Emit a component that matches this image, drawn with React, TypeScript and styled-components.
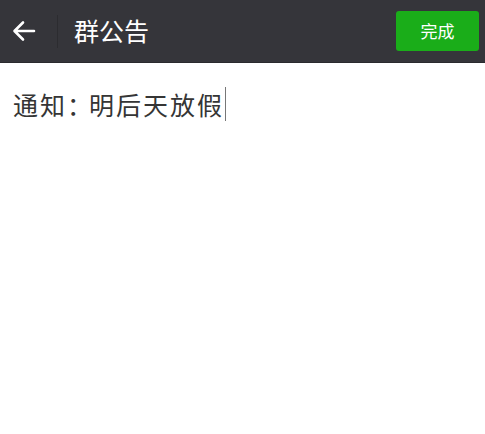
import React from "react";
import styled, { createGlobalStyle } from "styled-components";

const GlobalStyle = createGlobalStyle`
  html, body {
    margin: 0;
    padding: 0;
    background: #ffffff;
  }
  body {
    font-family: "Noto Sans CJK SC", "Noto Sans", sans-serif;
  }
`;

const Page = styled.div`
  width: 485px;
  height: 434px;
  background: #ffffff;
  display: flex;
  flex-direction: column;
`;

const TopBar = styled.div`
  height: 63px;
  background: #35353a;
  border-bottom: 1px solid #2a2a2e;
  display: flex;
  align-items: center;
  padding: 0 6px 0 12px;
  box-sizing: border-box;
`;

const BackButton = styled.div`
  width: 24px;
  height: 24px;
  display: flex;
  align-items: center;
  justify-content: center;
`;

const Divider = styled.div`
  width: 1px;
  height: 33px;
  background: #2c2c30;
  margin: 0 16px 0 21px;
`;

const Title = styled.div`
  flex: 1;
  color: #ffffff;
  font-size: 25px;
  line-height: 1;
  padding-bottom: 2px;
`;

const DoneButton = styled.button`
  width: 83px;
  height: 40px;
  border: 0;
  border-radius: 3px;
  background: #1aad19;
  color: #ffffff;
  font-family: "Noto Sans CJK SC", sans-serif;
  font-size: 17px;
  padding: 0;
  margin-top: -1px;
`;

const Editor = styled.div`
  padding: 24px 13px;
  font-size: 25px;
  letter-spacing: 2px;
  line-height: 34px;
  color: #353535;
  display: flex;
  align-items: center;
`;

const Colon = styled.span`
  letter-spacing: -3px;
`;

const Caret = styled.span`
  display: inline-block;
  width: 1px;
  height: 34px;
  background: #777777;
  margin-left: 1px;
`;

const ArrowIcon = () => (
  <svg width="24" height="22" viewBox="0 0 24 22">
    <path
      d="M22 11H3M11 2.5L2.5 11L11 19.5"
      fill="none"
      stroke="#ffffff"
      strokeWidth="2.6"
      strokeLinecap="round"
      strokeLinejoin="round"
    />
  </svg>
);

export default function App() {
  return (
    <Page>
      <GlobalStyle />
      <TopBar>
        <BackButton>
          <ArrowIcon />
        </BackButton>
        <Divider />
        <Title>群公告</Title>
        <DoneButton>完成</DoneButton>
      </TopBar>
      <Editor>
        通知<Colon>：</Colon>明后天放假
        <Caret />
      </Editor>
    </Page>
  );
}
